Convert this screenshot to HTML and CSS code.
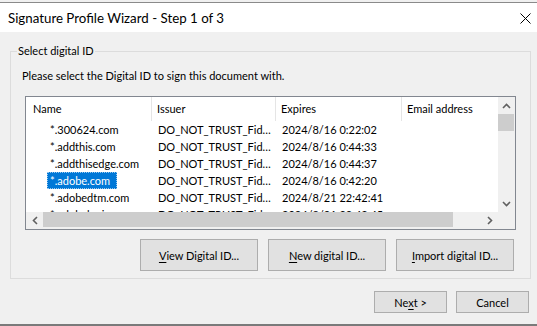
FILE: index.html
```html
<!DOCTYPE html>
<html lang="en">
<head>
    <meta charset="UTF-8">
    <title>Signature Profile Wizard - Step 1 of 3</title>
    <link rel="stylesheet" href="styles.css">
</head>
<body>
    <div class="window">
        <div class="titlebar">
            <span class="title">Signature Profile Wizard - Step 1 of 3</span>
            <svg class="close" width="11" height="11" viewBox="0 0 11 11">
                <path d="M0.5 0.5 L10.5 10.5 M10.5 0.5 L0.5 10.5" stroke="#000" stroke-width="1" fill="none"/>
            </svg>
        </div>

        <div class="content">
            <fieldset class="group">
                <legend>Select digital ID</legend>
                <p class="intro">Please select the Digital ID to sign this document with.</p>

                <div class="listview">
                    <div class="list-area">
                        <div class="row header">
                            <div class="cell">Name</div>
                            <div class="cell">Issuer</div>
                            <div class="cell">Expires</div>
                            <div class="cell">Email address</div>
                        </div>
                        <div class="row">
                            <div class="cell name"><span class="label">*.300624.com</span></div>
                            <div class="cell">DO_NOT_TRUST_Fid…</div>
                            <div class="cell">2024/8/16 0:22:02</div>
                            <div class="cell"></div>
                        </div>
                        <div class="row">
                            <div class="cell name"><span class="label">*.addthis.com</span></div>
                            <div class="cell">DO_NOT_TRUST_Fid…</div>
                            <div class="cell">2024/8/16 0:44:33</div>
                            <div class="cell"></div>
                        </div>
                        <div class="row">
                            <div class="cell name"><span class="label">*.addthisedge.com</span></div>
                            <div class="cell">DO_NOT_TRUST_Fid…</div>
                            <div class="cell">2024/8/16 0:44:37</div>
                            <div class="cell"></div>
                        </div>
                        <div class="row">
                            <div class="cell name"><span class="label selected">*.adobe.com</span></div>
                            <div class="cell">DO_NOT_TRUST_Fid…</div>
                            <div class="cell">2024/8/16 0:42:20</div>
                            <div class="cell"></div>
                        </div>
                        <div class="row">
                            <div class="cell name"><span class="label">*.adobedtm.com</span></div>
                            <div class="cell">DO_NOT_TRUST_Fid…</div>
                            <div class="cell">2024/8/21 22:42:41</div>
                            <div class="cell"></div>
                        </div>
                        <div class="row">
                            <div class="cell name"><span class="label">*.adobelogin.com</span></div>
                            <div class="cell">DO_NOT_TRUST_Fid…</div>
                            <div class="cell">2024/8/21 22:42:45</div>
                            <div class="cell"></div>
                        </div>
                    </div>

                    <!-- vertical scrollbar -->
                    <div class="vscroll">
                        <div class="sb-btn">
                            <svg width="9" height="6" viewBox="0 0 9 6"><polyline points="1,5 4.5,1.5 8,5" fill="none" stroke="#606060" stroke-width="1.6"/></svg>
                        </div>
                        <div class="vthumb"></div>
                        <div class="sb-fill"></div>
                        <div class="sb-btn">
                            <svg width="9" height="6" viewBox="0 0 9 6"><polyline points="1,1 4.5,4.5 8,1" fill="none" stroke="#606060" stroke-width="1.6"/></svg>
                        </div>
                    </div>

                    <!-- horizontal scrollbar -->
                    <div class="hscroll">
                        <div class="sb-btn">
                            <svg width="6" height="9" viewBox="0 0 6 9"><polyline points="5,1 1.5,4.5 5,8" fill="none" stroke="#606060" stroke-width="1.6"/></svg>
                        </div>
                        <div class="hthumb"></div>
                        <div class="sb-fill"></div>
                        <div class="sb-btn">
                            <svg width="6" height="9" viewBox="0 0 6 9"><polyline points="1,1 4.5,4.5 1,8" fill="none" stroke="#606060" stroke-width="1.6"/></svg>
                        </div>
                    </div>
                    <div class="corner"></div>
                </div>

                <div class="id-buttons">
                    <button class="btn wide"><u>V</u>iew Digital ID...</button>
                    <button class="btn wide"><u>N</u>ew digital ID...</button>
                    <button class="btn wide"><u>I</u>mport digital ID...</button>
                </div>
            </fieldset>

            <div class="footer">
                <button class="btn small">Ne<u>x</u>t &gt;</button>
                <button class="btn small">Cancel</button>
            </div>
        </div>
    </div>
</body>
</html>
```

FILE: styles.css
```css
body {
    margin: 0;
    width: 537px;
    height: 326px;
    overflow: hidden;
    background-color: #f0f0f0;
    font-family: Lato, "Segoe UI", sans-serif;
    font-size: 11px;
    color: #000;
}

.window {
    margin-top: 2px;
    border-top: 1px solid #8a8a8a;
    border-bottom: 2px solid #7a7a7a;
}

/* タイトルバー */
.titlebar {
    height: 29px;
    background-color: #fff;
    display: flex;
    align-items: center;
    justify-content: space-between;
    padding: 0 6px 0 8px;
}

.title {
    font-size: 13.3px;
    line-height: 16px;
}

.close {
    display: block;
    margin-top: 2px;
}

.content {
    height: 292px;
    display: flex;
    flex-direction: column;
}

/* グループボックス */
.group {
    margin: 11px 6px 0 10px;
    padding: 0 14px 7px 6px;
    border: 1px solid #dcdcdc;
    min-width: 0;
}

.group legend {
    padding: 0 1px;
    line-height: 16px;
}

.intro {
    margin: 9px 0 12px 5px;
    line-height: 16px;
}

/* リストビュー */
.listview {
    margin-left: 8px;
    height: 132px;
    border: 1px solid #828790;
    background-color: #fff;
    display: grid;
    grid-template-columns: 472px 17px;
    grid-template-rows: 115px 17px;
}

.list-area {
    overflow: hidden;
}

.row {
    display: grid;
    grid-template-columns: 126px 124px 126px 126px;
    height: 17px;
    line-height: 17px;
    white-space: nowrap;
}

.row .cell {
    padding-left: 6px;
    overflow: hidden;
}

.row.header {
    height: 24px;
    line-height: 24px;
}

.row.header .cell {
    border-right: 1px solid #e5e5e5;
    padding-left: 5px;
}

.row.header .cell:first-child {
    padding-left: 7px;
}

.row .cell.name {
    padding-left: 21px;
}

.label {
    display: inline-block;
    padding: 0 6px 0 2px;
    line-height: 15px;
    border: 1px dotted transparent;
}

.label.selected {
    background-color: #0078d7;
    color: #fff;
    border-color: #99c9ef;
}

/* スクロールバー */
.vscroll,
.hscroll {
    display: flex;
    background-color: #f0f0f0;
}

.vscroll {
    flex-direction: column;
}

.sb-btn {
    width: 17px;
    height: 17px;
    flex: none;
    display: flex;
    align-items: center;
    justify-content: center;
}

.sb-fill {
    flex: 1;
}

.vthumb {
    height: 17px;
    margin-right: 1px;
    background-color: #cdcdcd;
}

.hthumb {
    width: 410px;
    margin-bottom: 2px;
    background-color: #cdcdcd;
}

.corner {
    background-color: #f0f0f0;
}

/* ボタン */
.id-buttons {
    margin-top: 9px;
    display: flex;
    justify-content: flex-end;
    gap: 10px;
    padding-right: 2px;
}

.btn {
    font-family: inherit;
    font-size: 11px;
    color: #000;
    background-color: #e1e1e1;
    border: 1px solid #adadad;
    padding: 0;
    margin: 0;
}

.btn u {
    text-underline-offset: 2px;
}

.btn.wide {
    width: 118px;
    height: 32px;
}

.btn.small {
    width: 73px;
    height: 22px;
}

.footer {
    margin-top: 12px;
    display: flex;
    justify-content: flex-end;
    gap: 9px;
    padding-right: 8px;
}
```
